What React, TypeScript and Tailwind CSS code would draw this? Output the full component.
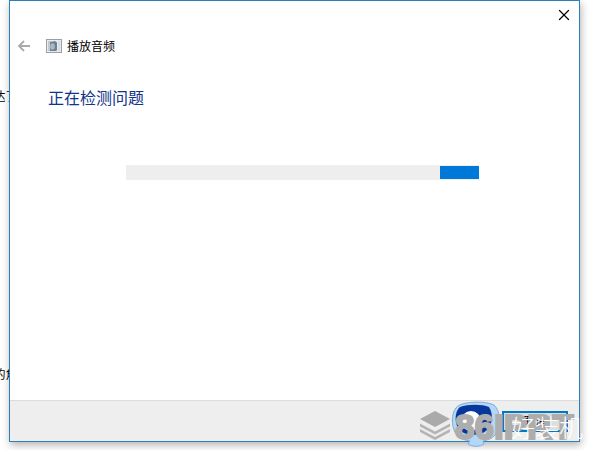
import { X } from "lucide-react";

function BackArrow() {
  return (
    <svg width="16" height="16" viewBox="0 0 16 16" fill="none" stroke="currentColor" strokeWidth="1.8" aria-hidden="true">
      <path d="M14 8H3M8 3 3 8l5 5" />
    </svg>
  );
}

function DeviceIcon() {
  return (
    <svg width="16" height="14" viewBox="0 0 16 14" aria-hidden="true">
      <rect x="0.5" y="0.5" width="15" height="13" fill="#e9ecef" stroke="#9a9fa5" />
      <rect x="2" y="2" width="3" height="10" fill="#c3c9d0" />
      <path d="M4 3 9 2l2 1.5v8L9.5 12H4z" fill="#6f7f90" />
      <ellipse cx="6.5" cy="7.5" rx="2.3" ry="3.2" fill="#a9b8c7" />
      <path d="M13 2v10" stroke="#c8ccd1" />
    </svg>
  );
}

function StackLogo() {
  return (
    <svg width="32" height="29" viewBox="0 0 32 29" aria-hidden="true">
      <path d="M16 0 31 8 16 16 1 8z" fill="#aaaaaa" />
      <path d="M1 12.5 16 20.5 31 12.5v3L16 23.5 1 15.5z" fill="#b4b4b4" />
      <path d="M1 18 16 26 31 18v3L16 29 1 21z" fill="#b4b4b4" />
    </svg>
  );
}

function MascotLogo() {
  return (
    <svg width="50" height="46" viewBox="0 0 50 46" aria-hidden="true">
      <path
        d="M7 5C14 0 36 0 43 4c7 6 7 22 1 30-3 4-8 5-12 6l1 3c-4 3-12 3-16 0l2-3C11 39 5 35 3 29 0 21 1 9 7 5z"
        fill="#b3d7f8"
        stroke="#86abd5"
        strokeWidth="1"
      />
      <path d="M9 6c8-3 22-3 29 0 5 8 3 18-2 23-6 6-18 6-25 2C4 27 2 12 9 6z" fill="#07379a" />
      <circle cx="20" cy="20" r="10" fill="#ffffff" />
    </svg>
  );
}

function Watermark() {
  return (
    <div className="pointer-events-none absolute -right-1 -bottom-2 flex h-12 items-center">
      <StackLogo />
      <div className="relative flex h-12 w-33 items-center">
        <div className="absolute top-0 left-0">
          <MascotLogo />
        </div>
        <span className="relative pt-1 pl-1 font-['Liberation_Sans',sans-serif] text-[35px] leading-8 font-bold whitespace-nowrap text-[#adadad] [-webkit-text-stroke:2px_#adadad]">
          86IPRT
        </span>
        <span className="absolute right-0 bottom-2 text-2xl leading-7 font-light whitespace-nowrap text-white">
          好装机
        </span>
      </div>
    </div>
  );
}

export default function App() {
  return (
    <div className="flex min-h-screen bg-white font-['Noto_Sans_CJK_SC',sans-serif] text-xs text-black">
      {/* Sliver of the page behind the dialog */}
      <div className="flex w-[9px] shrink-0 flex-col justify-between overflow-hidden pt-[88px] pb-[68px] pl-[2px]">
        <span className="flex justify-center leading-4 whitespace-nowrap">达了</span>
        <span className="flex justify-center leading-4 whitespace-nowrap">的角</span>
      </div>

      <main className="relative mr-[9px] mb-2 flex flex-1 flex-col border border-[#2a80b9] bg-white shadow-[1px_3px_8px_rgba(0,0,0,0.3)]">
        <div className="flex h-7 justify-end">
          <button type="button" aria-label="关闭" className="flex w-[30px] items-center justify-center">
            <X size={18} strokeWidth={1.6} />
          </button>
        </div>

        <header className="flex h-[34px] items-center pl-1.5">
          <button type="button" aria-label="返回" disabled className="text-[#aaaaaa]">
            <BackArrow />
          </button>
          <div className="ml-3.5 flex items-center gap-[5px]">
            <DeviceIcon />
            <span className="leading-4">播放音频</span>
          </div>
        </header>

        <section className="flex-1 pt-[22px]">
          <h1 className="pl-[38px] text-base leading-6 text-[#12358c]">正在检测问题</h1>
          <div
            role="progressbar"
            aria-label="正在检测问题"
            className="mt-14 mr-[100px] ml-[116px] flex h-[15px] items-center justify-end bg-[#eeeeee]"
          >
            <div className="h-[13px] w-[39px] bg-[#0078d7]" />
          </div>
        </section>

        <footer className="relative flex h-[41px] shrink-0 items-center justify-end border-t border-[#dddddd] bg-[#eeeeee] pr-[11px]">
          <button
            type="button"
            className="flex h-[21px] w-[66px] items-center justify-center border-2 border-[#0078c8] bg-[#dedede] text-xs leading-4"
          >
            取消
          </button>
          <Watermark />
        </footer>
      </main>
    </div>
  );
}
